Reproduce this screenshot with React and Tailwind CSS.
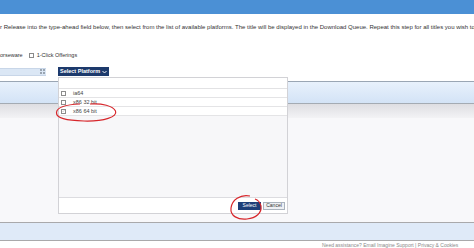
export default function App() {
  const rows = [
    { label: "ia64", checked: false },
    { label: "x86 32 bit", checked: false },
    { label: "x86 64 bit", checked: true },
  ];
  return (
    <div
      className="relative w-[474px] h-[248px] overflow-hidden bg-white text-[#333]"
      style={{ fontFamily: '"Liberation Sans", Arial, sans-serif' }}
    >
      <div className="h-[14px] bg-[#4b90d5]" />
      <div className="mt-[9px] h-[8px] leading-[8px] text-[6px] whitespace-nowrap">
        r Release into the type-ahead field below, then select from the list of available platforms. The title will be displayed in the Download Queue. Repeat this step for all titles you wish to
      </div>
      <div className="mt-[20px] h-[8px] flex items-center text-[5.5px] whitespace-nowrap">
        <span>orseware</span>
        <span className="ml-[6px] w-[5px] h-[5px] border border-[#8a8a8a] bg-white" />
        <span className="ml-[3px]">1-Click Offerings</span>
      </div>
      <div className="mt-[8px] h-[9px] flex items-center">
        <div className="w-[46px] h-[8px] bg-[#dbe7f5] border-y border-[#c8d6e8] flex items-center justify-end pr-[1px]">
          <svg width="5" height="5" viewBox="0 0 5 5">
            <rect x="0" y="0" width="2" height="2" fill="#9aa5b1" />
            <rect x="3" y="0" width="2" height="2" fill="#9aa5b1" />
            <rect x="0" y="3" width="2" height="2" fill="#9aa5b1" />
            <rect x="3" y="3" width="2" height="2" fill="#9aa5b1" />
          </svg>
        </div>
        <div className="ml-[12px] w-[51px] h-[9px] bg-[#1d3a6c] text-white text-[5.5px] font-bold flex items-center pl-[2px] whitespace-nowrap">
          Select Platform
          <svg className="ml-[2px]" width="5" height="4" viewBox="0 0 5 4">
            <path d="M0.5 1 L2.5 3 L4.5 1" stroke="white" strokeWidth="0.9" fill="none" />
          </svg>
        </div>
      </div>
      <div className="mt-[5px] border-t border-[#9aa6b4] h-[22px] bg-gradient-to-b from-[#e8f1fc] to-[#d3e3f6]" />
      <div className="border-t border-[#a4abb3] h-[15px] bg-gradient-to-b from-[#dedee2] to-[#f3f3f5]" />
      <div className="h-[104px] bg-[#f8f8fa]" />
      <div className="border-y border-[#a9a9ab] h-[19px] bg-[#dfeaf8]" />
      <div className="mt-[1px] pl-[322px] whitespace-nowrap text-[5px] leading-[6px] text-[#8a8a8a]">
        Need assistance? Email Imagine Support | Privacy &amp; Cookies
      </div>

      {/* Popup */}
      <div className="absolute left-[58px] top-[77px] w-[230px] h-[137px] border border-[#d2d2d6] bg-white flex flex-col">
        <div className="h-[11px] bg-white border-b border-[#e2e2e4]" />
        {rows.map((r) => (
          <div
            key={r.label}
            className="h-[9px] bg-white border-b border-[#e4e4e6] flex items-center pl-[2px] text-[5.5px] text-[#444]"
          >
            <span className="w-[5px] h-[5px] border border-[#8c8c8c] bg-white flex items-center justify-center">
              {r.checked && (
                <svg width="4" height="4" viewBox="0 0 4 4">
                  <path d="M0.5 2 L1.5 3 L3.5 0.7" stroke="#a8a8a8" strokeWidth="0.7" fill="none" />
                </svg>
              )}
            </span>
            <span className="ml-[7px]">{r.label}</span>
          </div>
        ))}
        <div className="flex-1 bg-[#f7f7f9] border-b border-[#dcdce0]" />
        <div className="h-[15px] bg-white flex items-center justify-end pr-[2px] gap-[2px]">
          <div className="w-[23px] h-[8px] bg-[#1e3f78] text-white text-[5px] flex items-center justify-center">
            Select
          </div>
          <div className="w-[22px] h-[8px] bg-[#eef0f4] border border-[#aab3bd] text-[#333] text-[5px] flex items-center justify-center">
            Cancel
          </div>
        </div>
      </div>

      {/* Red annotations */}
      <svg className="absolute left-0 top-0 pointer-events-none" width="474" height="248" viewBox="0 0 474 248">
        <path
          d="M90 104 C102 103, 113 106, 115.5 111 C118 117, 104 121.5, 84 121 C66 120.5, 56 118, 56.5 112.5 C57 107, 66 104.5, 80 104"
          stroke="#d7262b"
          strokeWidth="1.2"
          fill="none"
        />
        <path
          d="M250 196 C240 194, 232 200, 231 208 C230 216, 238 220, 247 219 C256 218, 262 213, 261 206 C260 202, 258 200, 255 199"
          stroke="#d7262b"
          strokeWidth="1.2"
          fill="none"
        />
      </svg>
    </div>
  );
}
